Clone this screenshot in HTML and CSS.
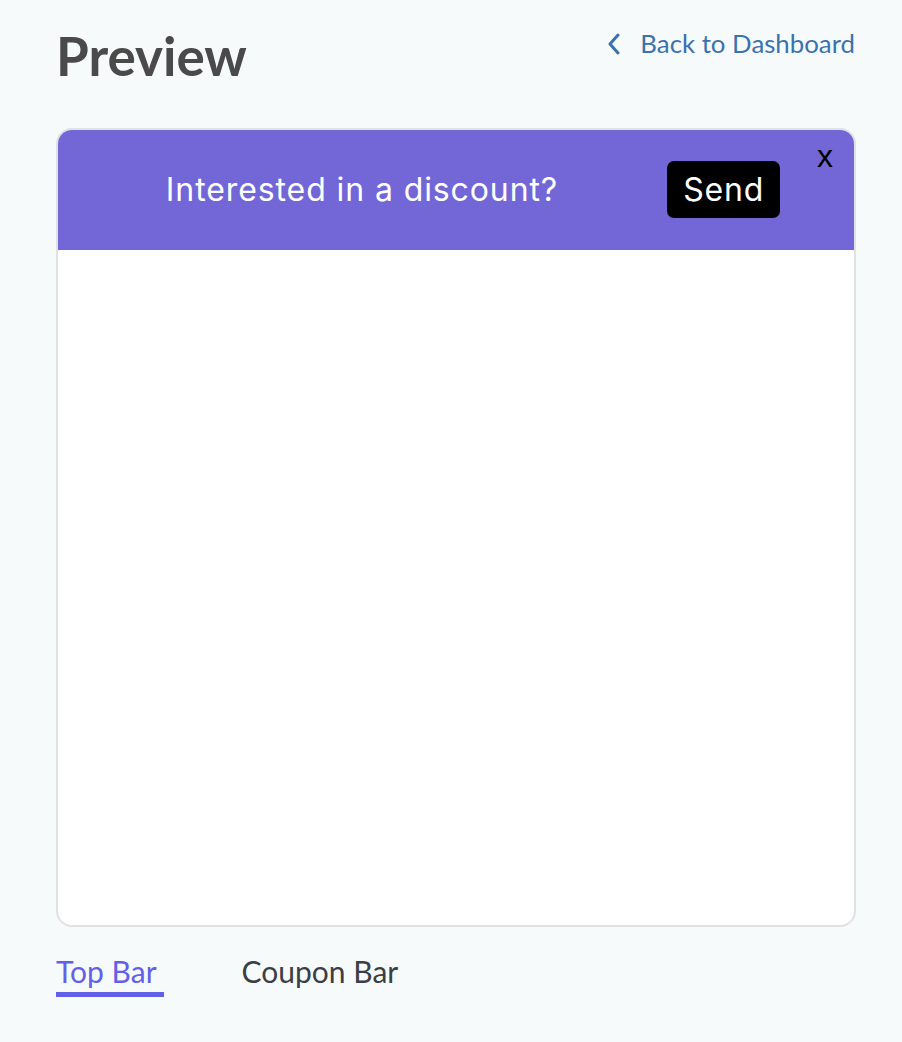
FILE: index.html
```html
<!DOCTYPE html>
<html>
<head>
<meta charset="utf-8">
<link rel="stylesheet" href="styles.css">
</head>
<body>
<div class="page">
  <header class="header">
    <h1 class="title">Preview</h1>
    <a class="back" href="#">
      <svg class="chev" width="14" height="22" viewBox="0 0 14 22"><path d="M11 2 L3 11 L11 20" fill="none" stroke="#3a72ae" stroke-width="3" stroke-linecap="round" stroke-linejoin="round"/></svg>
      <span>Back to Dashboard</span>
    </a>
  </header>
  <section class="card">
    <div class="banner">
      <span class="banner-text">Interested in a discount?</span>
      <button class="send">Send</button>
      <span class="close">x</span>
    </div>
    <div class="body"></div>
  </section>
  <nav class="tabs">
    <span class="tab active">Top Bar</span>
    <span class="tab">Coupon Bar</span>
  </nav>
</div>
</body>
</html>
```
FILE: styles.css
```css
html, body {
  margin: 0;
  background: #f7fafb;
}
.page {
  width: 800px;
  margin-left: 56px;
  font-family: Lato, "Liberation Sans", sans-serif;
}
.header {
  display: flex;
  justify-content: space-between;
  align-items: flex-start;
  height: 128px;
}
.title {
  margin: 0;
  padding-top: 29px;
  font-size: 53px;
  font-weight: 700;
  color: #4a4a4a;
  line-height: 1;
}
.back {
  display: flex;
  align-items: center;
  gap: 19px;
  margin-top: 31px;
  margin-right: 1px;
  text-decoration: none;
  color: #3a72ae;
  font-size: 25.8px;
  line-height: 1;
}
.chev { display: block; }
.card {
  box-sizing: border-box;
  height: 799px;
  border: 2px solid #dfe1e3;
  border-radius: 16px;
  background: #fff;
  overflow: hidden;
}
.banner {
  position: relative;
  height: 122px;
  margin: -2px -2px 0;
  background: #7367d8;
  display: flex;
  align-items: center;
  justify-content: center;
  gap: 109px;
  padding-left: 34px;
  font-family: Inter, "Noto Sans", sans-serif;
}
.banner-text {
  color: #fff;
  font-size: 32px;
  letter-spacing: 0.9px;
}
.send {
  width: 113px;
  height: 57px;
  border: 0;
  border-radius: 7px;
  background: #000;
  color: #fff;
  font-family: Inter, "Noto Sans", sans-serif;
  font-size: 32px;
  letter-spacing: 0.8px;
  padding: 0;
}
.close {
  position: absolute;
  right: 23px;
  top: 12px;
  font-family: "Liberation Sans", sans-serif;
  font-size: 32px;
  line-height: 1;
  color: #000;
}
.tabs {
  display: flex;
  gap: 78px;
  margin-top: 29px;
}
.tab {
  font-size: 30px;
  color: #3b3f45;
  line-height: 1;
  padding: 0 7px 6px 0;
}
.tab.active {
  color: #6360e8;
  border-bottom: 5px solid #6360e8;
}
```
